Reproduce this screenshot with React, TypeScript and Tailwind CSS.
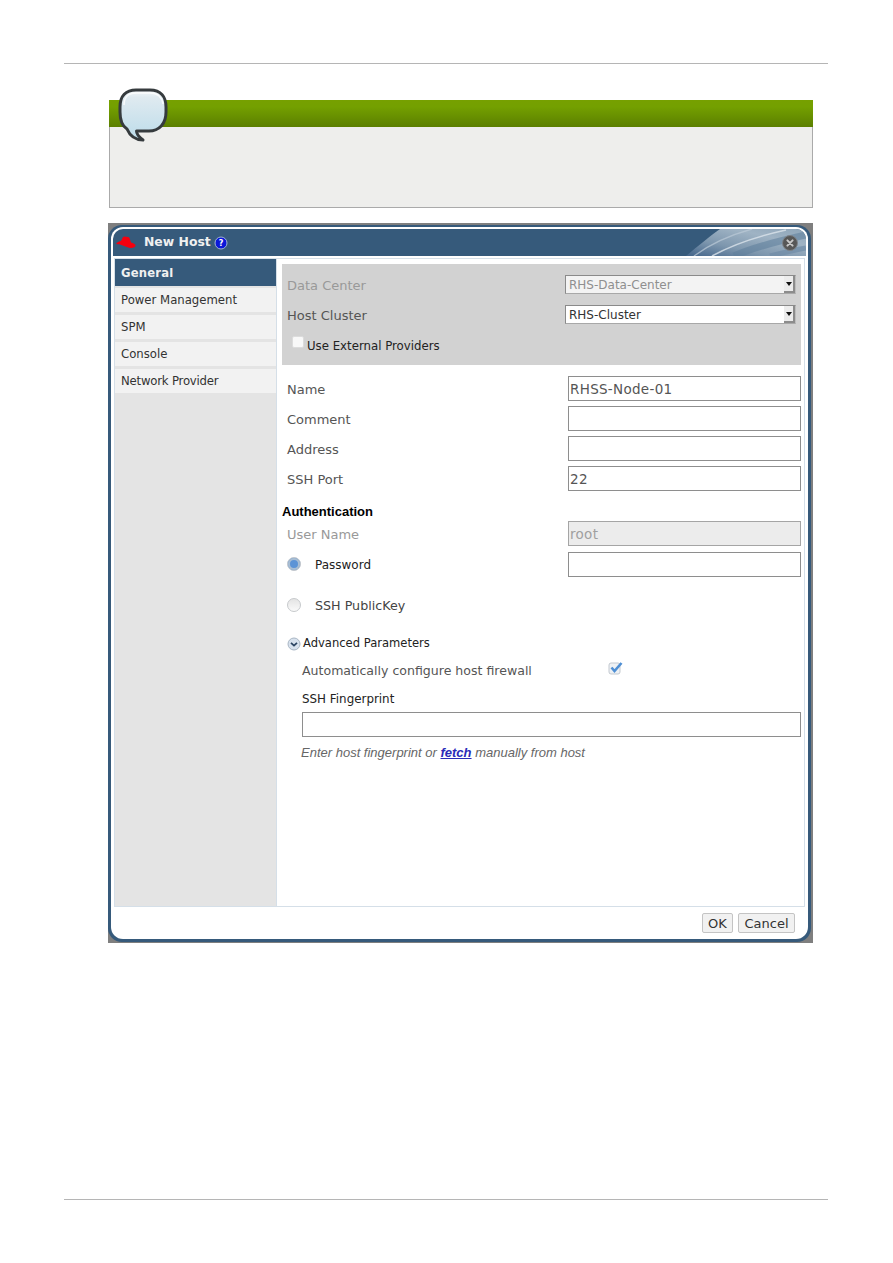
import React from "react";

const dv = "font-['DejaVu_Sans',sans-serif]";

function Bubble() {
  return (
    <svg width="52" height="56" viewBox="0 0 52 56" className="absolute left-[8px] top-[-13px]">
      <defs>
        <linearGradient id="bub" x1="0" y1="0" x2="0" y2="1">
          <stop offset="0" stopColor="#f4f8fa" />
          <stop offset="0.15" stopColor="#dfeaf0" />
          <stop offset="1" stopColor="#bcdcea" />
        </linearGradient>
      </defs>
      <path
        d="M18 3 H32 C43 3 48 10 48 20 V25 C48 37 41 44 31 44 H18.5 C18.5 47 21 50 25 53 C17 53 12 49 9 42 C4 39 2 33 2 25 V20 C2 9 8 3 18 3 Z"
        fill="url(#bub)"
        stroke="#363b3e"
        strokeWidth="3"
        strokeLinejoin="round"
      />
      <path d="M6 18 C6 10 11 6 18 6 H32 C39 6 44 10 45 17" stroke="#ffffff" strokeWidth="1.6" fill="none" opacity="0.8" />
    </svg>
  );
}

function RedHat() {
  return (
    <svg width="20" height="13" viewBox="0 0 20 13" className="mr-[8px]">
      <path
        d="M7 1 C8 0 10 .5 11.5 1 C13 .6 13.6 1.5 14 3.4 L15 6.5 C17 7 19.5 8 19.5 9.6 C19.5 11.6 16 12.6 13 11.8 C9 10.6 5.5 8.8 3.5 8.2 C2 8.6 .6 8.2 .2 7.2 C1.6 6 3.6 5.2 5 5 Z"
        fill="#f5000f"
      />
    </svg>
  );
}

function Wave() {
  return (
    <svg
      width="120"
      height="27"
      viewBox="0 0 120 27"
      preserveAspectRatio="none"
      className="absolute right-0 top-0 rounded-tr-[10px]"
    >
      <defs>
        <linearGradient id="wv" x1="0" y1="1" x2="1" y2="0">
          <stop offset="0" stopColor="#42648a" />
          <stop offset="0.35" stopColor="#7e97ae" />
          <stop offset="0.7" stopColor="#9fb3c4" />
          <stop offset="1" stopColor="#8ea5b9" />
        </linearGradient>
      </defs>
      <path d="M0 27 C12 17 24 7 34 0 H120 V27 Z" fill="url(#wv)" />
      <path d="M8 27 C24 15 44 6 66 0" stroke="#b9c8d6" strokeWidth="1.4" fill="none" opacity="0.75" />
      <path d="M26 27 C44 17 68 8 100 1" stroke="#dbe4eb" strokeWidth="1.6" fill="none" opacity="0.8" />
      <path d="M48 27 C66 19 88 13 120 6" stroke="#5d7d9b" strokeWidth="7" fill="none" opacity="0.55" />
      <path d="M84 27 C96 24 108 21 120 19" stroke="#6f8ca6" strokeWidth="5" fill="none" opacity="0.7" />
    </svg>
  );
}

function Close() {
  return (
    <svg width="16" height="16" viewBox="0 0 16 16" className="relative">
      <circle cx="8" cy="8" r="7.5" fill="#575757" stroke="#7c8288" strokeWidth="1" />
      <path d="M5.4 5.4 L10.6 10.6 M10.6 5.4 L5.4 10.6" stroke="#c9c9c9" strokeWidth="2" strokeLinecap="round" />
    </svg>
  );
}

function Select({ value, disabled }: { value: string; disabled?: boolean }) {
  return (
    <div
      className={`flex h-[19px] w-[231px] items-center justify-between border border-t-[#8a8a8a] border-l-[#8a8a8a] border-r-[#bdbdbd] border-b-[#a8a8a8] pl-[3px] text-[12px] ${
        disabled ? "bg-[#f3f3f3] text-[#8f8f8f]" : "bg-white text-[#333]"
      }`}
    >
      <span>{value}</span>
      <span className="flex h-full w-[11px] items-center justify-center border-b-2 border-r-2 border-[#8c8c8c] bg-[#ececec]">
        <svg width="6" height="4" viewBox="0 0 6 4">
          <path d="M0 0 H6 L3 4 Z" fill="#111" />
        </svg>
      </span>
    </div>
  );
}

function Input({ value, disabled, className }: { value?: string; disabled?: boolean; className?: string }) {
  return (
    <div
      className={`flex h-[25px] items-center border pl-[1px] pt-[2px] text-[13.5px] tracking-[0.3px] ${
        disabled ? "border-[#a5a5a5] bg-[#ececec] text-[#a0a0a0]" : "border-[#8e8e8e] bg-white text-[#555]"
      } ${className ?? "w-[233px]"}`}
    >
      {value}
    </div>
  );
}

function Row({ label, value, disabled }: { label: string; value?: string; disabled?: boolean }) {
  return (
    <div className="flex h-[25px] items-center justify-between pl-[5px]">
      <span className={`text-[13px] ${disabled ? "pt-[3px] text-[#999]" : "pt-[2px] text-[#555]"}`}>{label}</span>
      <Input value={value} disabled={disabled} />
    </div>
  );
}

function Radio({ on }: { on?: boolean }) {
  return (
    <span
      className={`block h-[14px] w-[14px] rounded-full border border-[#c6c9cc] ${
        on ? "bg-[#5b93d6] shadow-[inset_0_0_0_2px_#a9bed3]" : "bg-[linear-gradient(#e4e4e4,#fafafa)]"
      }`}
    />
  );
}

const items = [
  { t: "Power Management", c: "" },
  { t: "SPM", c: "" },
  { t: "Console", c: "" },
  { t: "Network Provider", c: "tracking-[-0.2px]" },
];

export default function App() {
  return (
    <div className={`${dv} flex h-[1263px] w-[893px] flex-col overflow-hidden bg-white pt-[63px]`}>
      <div className="ml-[64px] h-px w-[764px] bg-[#b5b5b5]" />

      <div className="relative ml-[109px] mt-[36px] h-[108px] w-[704px] border-x border-b border-[#aaaaaa] bg-[#eeeeec]">
        <div className="-mx-px h-[27px] bg-[linear-gradient(#76a000_0%,#74a000_25%,#5b7f00_100%)]" />
        <Bubble />
      </div>

      <div className="ml-[108px] mt-[15px] h-[720px] w-[705px] bg-[#7f7f7f] pb-px pr-[2px] pt-[2px]">
        <div className="h-full rounded-[14px] bg-[#365a7b] px-[3px] pb-[3px] pt-[2px]">
          <div className="flex h-full flex-col rounded-[12px] bg-white p-[2px]">
            <div className="relative flex h-[27px] items-center rounded-t-[10px] bg-[#365a7b] pl-[3px] pr-[8px]">
              <Wave />
              <RedHat />
              <span className="text-[12.4px] font-bold text-[#f0f0f0]">New Host</span>
              <svg width="14" height="14" viewBox="0 0 14 14" className="relative ml-[3px]">
                <circle cx="7" cy="7" r="6" fill="#0b18d8" stroke="#9fb3d6" strokeWidth="1" />
                <text x="7" y="10" textAnchor="middle" fontSize="8" fontWeight="700" fill="#fff">?</text>
              </svg>
              <span className="flex-1" />
              <Close />
            </div>

            <div className="mx-px mt-[2px] flex h-[649px] border border-[#d5dfe8]">
              <div className="flex w-[162px] flex-col gap-[3px] border-r border-[#d5dfe8] bg-[#e4e4e4]">
                <div className="mb-[-1px] flex h-[27px] items-center bg-[#365a7b] pl-[6px] pt-[2px] text-[11.6px] font-bold tracking-[0.2px] text-[#f0f0f0]">
                  General
                </div>
                {items.map((i) => (
                  <div key={i.t} className={`flex h-[24px] items-center bg-[#f2f2f2] pl-[6px] pt-[2px] text-[11.7px] text-[#333] ${i.c}`}>
                    {i.t}
                  </div>
                ))}
              </div>

              <div className="flex flex-1 flex-col pl-[5px] pr-[3px] pt-[5px]">
                <div className="h-[101px] bg-[#d2d2d2] pl-[5px] pr-[5px] pt-[11px]">
                  <div className="flex h-[19px] items-center justify-between">
                    <span className="pt-[2px] text-[13px] text-[#999]">Data Center</span>
                    <Select value="RHS-Data-Center" disabled />
                  </div>
                  <div className="mt-[11px] flex h-[19px] items-center justify-between">
                    <span className="pt-[2px] text-[13px] text-[#555]">Host Cluster</span>
                    <Select value="RHS-Cluster" />
                  </div>
                  <div className="mt-[12px] flex items-start pl-[5px]">
                    <span className="h-[12px] w-[12px] rounded-[2px] border border-[#dcdcdc] bg-[#f8f8f8]" />
                    <span className="ml-[3px] mt-[2px] text-[11.75px] text-[#222]">Use External Providers</span>
                  </div>
                </div>

                <div className="mt-[11px] flex flex-col gap-[5px]">
                  <Row label="Name" value="RHSS-Node-01" />
                  <Row label="Comment" />
                  <Row label="Address" />
                  <Row label="SSH Port" value="22" />
                </div>

                <div className="mt-[12px] h-[17px] font-['Liberation_Sans',sans-serif] text-[13px] font-bold leading-[17px] text-black">
                  Authentication
                </div>
                <div className="mt-px">
                  <Row label="User Name" value="root" disabled />
                </div>
                <div className="mt-[5px] flex h-[26px] items-center justify-between pl-[5px]">
                  <div className="flex items-center">
                    <Radio on />
                    <span className="ml-[14px] pt-[2px] text-[12px] text-[#222]">Password</span>
                  </div>
                  <Input />
                </div>
                <div className="mt-[15px] flex h-[26px] items-center pl-[5px]">
                  <Radio />
                  <span className="ml-[14px] pt-[2px] text-[12.7px] text-[#444]">SSH PublicKey</span>
                </div>

                <div className="mt-[19px] flex h-[14px] items-center pl-[5px]">
                  <svg width="14" height="14" viewBox="0 0 14 14" className="mr-[2px]">
                    <circle cx="7" cy="7" r="6" fill="#d8e2ee" stroke="#a9b6c4" strokeWidth="1" />
                    <path d="M4 5.8 L7 8.6 L10 5.8" stroke="#2c4563" strokeWidth="1.8" fill="none" />
                  </svg>
                  <span className="text-[11.55px] text-[#222]">Advanced Parameters</span>
                </div>

                <div className="mt-[12px] flex h-[16px] items-center pl-[20px]">
                  <span className="w-[306px] text-[12.55px] text-[#555]">Automatically configure host firewall</span>
                  <svg width="16" height="14" viewBox="0 0 16 14" className="relative -top-[3px]">
                    <rect x="1" y="2" width="11" height="11" rx="2" fill="#eef1f4" stroke="#c3c9d0" />
                    <path d="M3.5 6.5 L6.5 10 L13.5 2" stroke="#4f8fd4" strokeWidth="2.6" fill="none" />
                  </svg>
                </div>

                <div className="ml-[20px] mt-[12px] h-[16px] text-[11.9px] leading-[16px] text-[#222]">SSH Fingerprint</div>
                <div className="ml-[20px] mt-[5px]">
                  <Input className="w-[499px]" />
                </div>
                <div className="ml-[19px] mt-[6px] font-['Liberation_Sans',sans-serif] text-[13px] italic text-[#666]">
                  Enter host fingerprint or{" "}
                  <a className="font-semibold text-[#2a2ab8] underline">fetch</a> manually from host
                </div>
              </div>
            </div>

            <div className="flex flex-1 justify-end gap-[5px] pr-[11px] pt-[6px]">
              <button className="h-[20px] w-[31px] rounded-[2px] border border-[#c4c4c4] bg-[#f1f1f1] text-[13px] text-[#333]">OK</button>
              <button className="h-[20px] w-[57px] rounded-[2px] border border-[#c4c4c4] bg-[#f1f1f1] text-[13px] text-[#333]">Cancel</button>
            </div>
          </div>
        </div>
      </div>

      <div className="ml-[64px] mt-[256px] h-px w-[764px] bg-[#b5b5b5]" />
    </div>
  );
}
